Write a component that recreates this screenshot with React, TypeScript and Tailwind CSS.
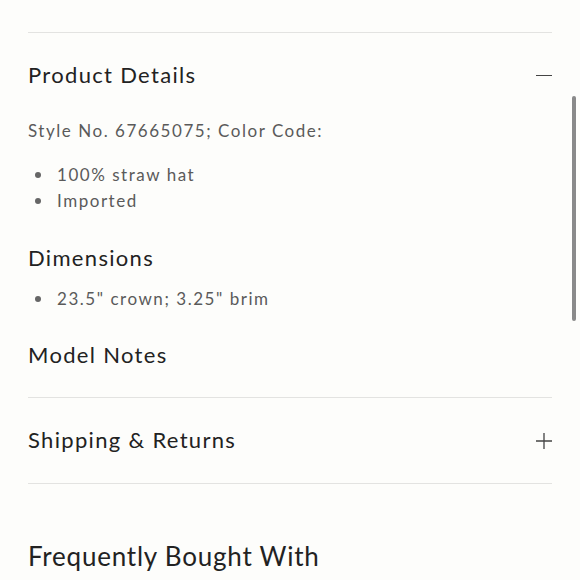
import React from "react";

function Bullet({ children }: { children: React.ReactNode }) {
  return (
    <li className="flex items-center">
      <span className="w-[6px] h-[6px] rounded-full bg-[#666] ml-[7px] mr-[16px] shrink-0" />
      {children}
    </li>
  );
}

export default function App() {
  const font = { fontFamily: "Lato, 'Noto Sans', sans-serif" };
  const head = "text-[22px] leading-[30px] tracking-[0.06em] text-[#222]";
  const body = "text-[17px] leading-[26px] tracking-[0.09em] text-[#5a5a5a]";
  return (
    <div className="relative w-[580px] h-[580px] overflow-hidden bg-[#fdfdfb]" style={font}>
      <div className="px-[28px] pt-[32px]">
        <div className="border-t border-[#e3e3e1]">
          <div className="flex items-center justify-between pt-[27px]">
            <h2 className={head}>Product Details</h2>
            <div className="w-[16px] h-[1.5px] bg-[#444] mt-[1px]" />
          </div>
          <p className={`mt-[28px] ${body}`}>Style No. 67665075; Color Code:</p>
          <ul className={`mt-[18px] ${body}`}>
            <Bullet>100% straw hat</Bullet>
            <Bullet>Imported</Bullet>
          </ul>
          <h3 className={`mt-[29px] ${head}`}>Dimensions</h3>
          <ul className={`mt-[13px] ${body}`}>
            <Bullet>23.5" crown; 3.25" brim</Bullet>
          </ul>
          <h3 className={`mt-[28px] ${head}`}>Model Notes</h3>
          <div className="h-[27px]" />
        </div>
        <div className="border-t border-[#e3e3e1]">
          <div className="flex items-center justify-between pt-[27px] pb-[28px]">
            <h2 className={head}>Shipping &amp; Returns</h2>
            <svg width="16" height="16" viewBox="0 0 16 16" className="mt-[2px]">
              <path d="M8 0V16M0 8H16" stroke="#444" strokeWidth="1.3" />
            </svg>
          </div>
        </div>
        <div className="border-t border-[#e3e3e1]">
          <h2 className="mt-[56px] text-[26px] leading-[32px] tracking-[0.03em] text-[#222]">Frequently Bought With</h2>
        </div>
      </div>
      <div className="absolute left-[572px] top-[96px] w-[4px] h-[225px] rounded-full bg-[#8a8a8a]" />
    </div>
  );
}
